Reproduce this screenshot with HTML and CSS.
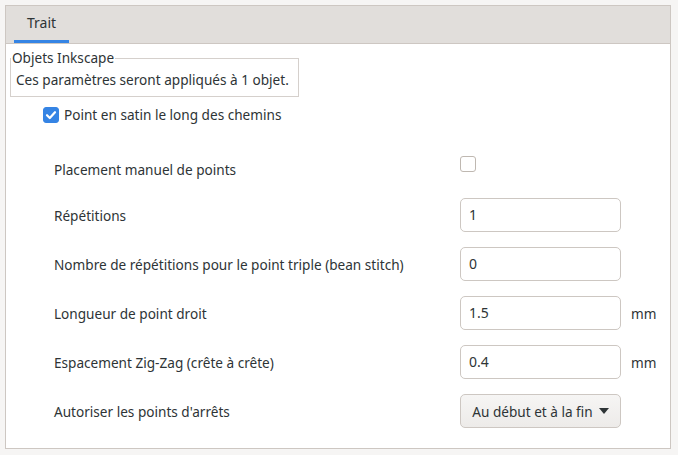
FILE: index.html
```html
<!DOCTYPE html>
<html lang="fr">
<head>
<meta charset="utf-8">
<link rel="stylesheet" href="styles.css">
</head>
<body>
<div class="notebook">
  <div class="tabs">
    <div class="tab active">Trait</div>
  </div>
  <div class="page">
    <fieldset class="frame">
      <legend>Objets Inkscape</legend>
      <div class="frame-text">Ces paramètres seront appliqués à 1 objet.</div>
    </fieldset>
    <label class="main-check">
      <span class="check checked">
        <svg width="16" height="16" viewBox="0 0 16 16"><path d="M4 8.2 L6.8 11 L12 5.2" fill="none" stroke="#fff" stroke-width="2.2" stroke-linecap="round" stroke-linejoin="round"/></svg>
      </span>
      <span>Point en satin le long des chemins</span>
    </label>
    <div class="params">
      <div class="row first">
        <div class="label">Placement manuel de points</div>
        <div class="control"><span class="check"></span></div>
        <div class="unit"></div>
      </div>
      <div class="row">
        <div class="label">Répétitions</div>
        <div class="control"><div class="entry">1</div></div>
        <div class="unit"></div>
      </div>
      <div class="row">
        <div class="label">Nombre de répétitions pour le point triple (bean stitch)</div>
        <div class="control"><div class="entry">0</div></div>
        <div class="unit"></div>
      </div>
      <div class="row">
        <div class="label">Longueur de point droit</div>
        <div class="control"><div class="entry">1.5</div></div>
        <div class="unit">mm</div>
      </div>
      <div class="row">
        <div class="label">Espacement Zig-Zag (crête à crête)</div>
        <div class="control"><div class="entry">0.4</div></div>
        <div class="unit">mm</div>
      </div>
      <div class="row">
        <div class="label">Autoriser les points d'arrêts</div>
        <div class="control">
          <div class="combo">Au début et à la fin
            <svg width="10" height="6" viewBox="0 0 10 6"><path d="M0 0 H10 L5 6 Z" fill="#2e3436"/></svg>
          </div>
        </div>
        <div class="unit"></div>
      </div>
    </div>
  </div>
</div>
</body>
</html>
```
FILE: styles.css
```css
* { box-sizing: border-box; }
html, body { margin: 0; padding: 0; }
body {
  background: #f6f5f4;
  font-family: "Noto Sans", "Open Sans", sans-serif;
  font-size: 13.6px;
  color: #2e3436;
  padding: 5px 7px 6px 5px;
}
.notebook {
  border: 1px solid #cdc7c2;
  background: #fff;
  height: 444px;
  display: flex;
  flex-direction: column;
}
.tabs {
  background: #e1dedb;
  height: 38px;
  border-bottom: 1px solid #cdc7c2;
  display: flex;
  padding-left: 8px;
}
.tab {
  padding: 0 12px;
  min-width: 55px;
  text-align: center;
  line-height: 34px;
  font-size: 14px;
  color: #2e3436;
  border-bottom: 3px solid #3584e4;
  height: 37px;
}
.page {
  flex: 1;
  padding: 6px 4px 0 4px;
}
.frame {
  border: 1px solid #d5d0cc;
  margin: 0;
  padding: 0 5px 3px 5px;
  width: 289px;
  display: block;
}
.frame legend {
  padding: 0 1px;
  margin-left: -5px;
  line-height: 16px;
}
.frame-text {
  line-height: 26px;
  padding-top: 1px;
}
.main-check {
  display: flex;
  align-items: center;
  gap: 5px;
  margin: 8px 0 0 33px;
  line-height: 20px;
}
.check {
  width: 16px;
  height: 16px;
  border: 1px solid #bfb8b1;
  border-radius: 3px;
  background: #fff;
  display: inline-block;
}
.check.checked {
  background: #3584e4;
  border-color: #3584e4;
  display: flex;
  align-items: center;
  justify-content: center;
}
.check.checked svg { display: block; margin: -1px; }
.params {
  margin-top: 29px;
  display: flex;
  flex-direction: column;
  gap: 15px;
  padding-left: 44px;
}
.row {
  display: grid;
  grid-template-columns: 406px 161px 40px;
  align-items: center;
  height: 34px;
}
.row.first { height: 30px; margin-bottom: -1px; }
.row.first .control { align-self: start; padding-top: 2px; }
.control { display: flex; align-items: center; }
.entry {
  width: 161px;
  height: 34px;
  border: 1px solid #cdc7c2;
  border-radius: 5px;
  padding: 0 8px;
  line-height: 32px;
  font-size: 14px;
  color: #2e3436;
  background: #fff;
}
.combo {
  width: 161px;
  height: 34px;
  border: 1px solid #cdc7c2;
  border-radius: 5px;
  background: linear-gradient(#f6f5f4, #edebe9);
  display: flex;
  align-items: center;
  justify-content: center;
  gap: 6px;
}
.unit { padding-left: 10px; }
```
